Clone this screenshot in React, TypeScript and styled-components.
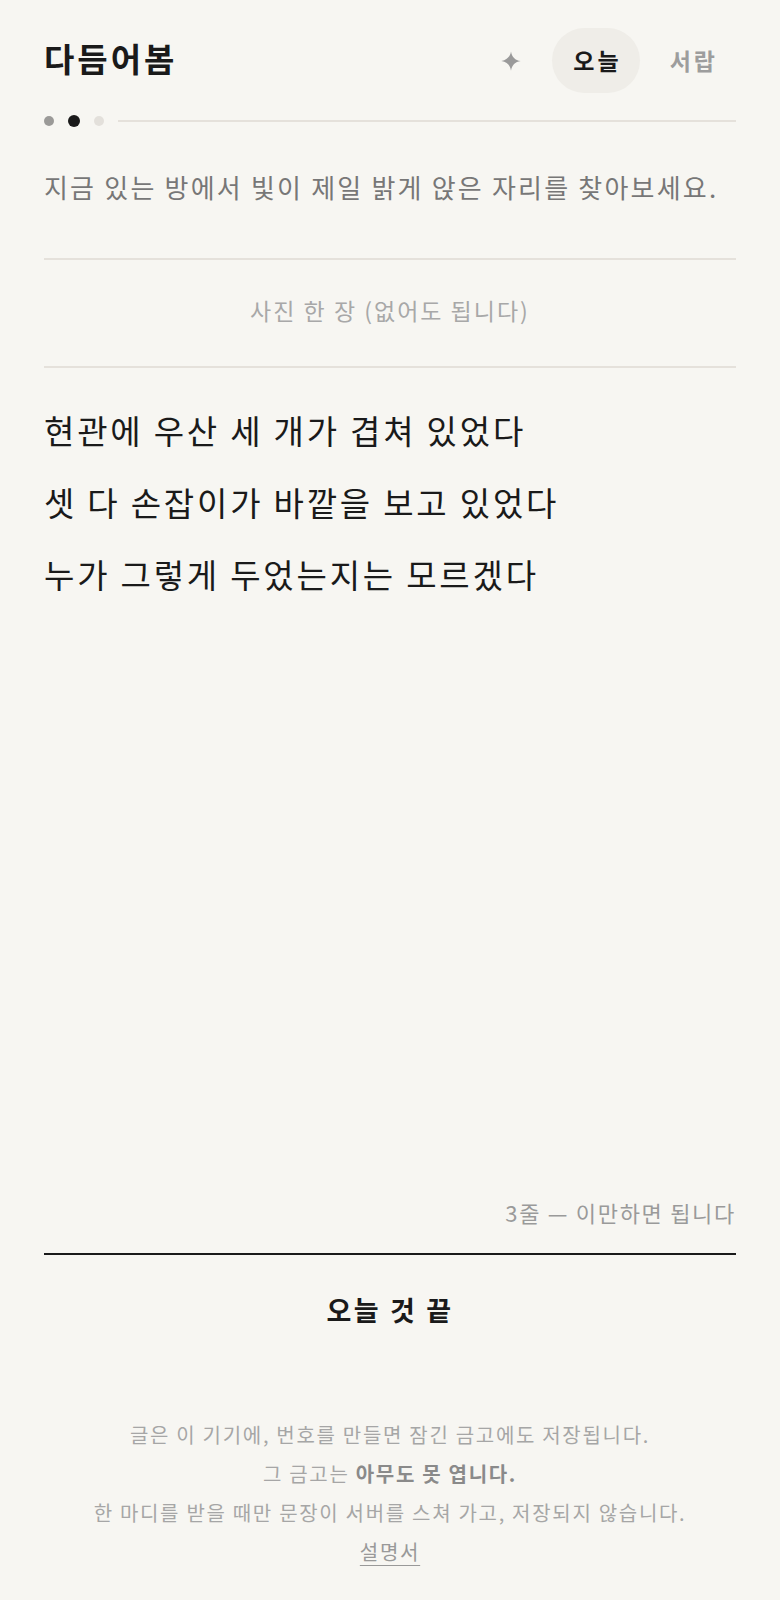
import styled, { createGlobalStyle } from 'styled-components'
import { ReactElement } from 'react'

const GlobalStyle = createGlobalStyle`
  html, body {
    margin: 0;
    padding: 0;
    background: #f7f6f2;
  }
  body {
    font-family: "Noto Sans CJK KR", "Noto Sans", sans-serif;
    color: #1a1a1a;
  }
  * { box-sizing: border-box; }
`

const Page = styled.div`
  min-height: 100vh;
  padding: 28px 44px 29px;
  display: flex;
  flex-direction: column;
`

const Header = styled.header`
  display: flex;
  align-items: center;
  justify-content: space-between;
`

const Title = styled.h1`
  margin: -4px 0 0;
  font-size: 33px;
  font-weight: 700;
  letter-spacing: 3px;
  line-height: 1;
`

const Nav = styled.nav`
  display: flex;
  align-items: center;
  gap: 9px;
`

const IconButton = styled.button`
  border: none;
  background: transparent;
  padding: 11px;
  margin-right: 10px;
  display: flex;
  color: #9a9a9a;
`

const NavButton = styled.button<{ $active?: boolean }>`
  border: none;
  font-family: inherit;
  font-size: 23px;
  font-weight: 700;
  letter-spacing: 3px;
  line-height: 33px;
  padding: 16px 18px 16px 21px;
  border-radius: 33px;
  background: ${p => p.$active ? '#efede8' : 'transparent'};
  color: ${p => p.$active ? '#1a1a1a' : '#9d9d9d'};
`

const Progress = styled.div`
  display: flex;
  align-items: center;
  gap: 14px;
  margin-top: 22px;
`

const Dot = styled.span<{ $state: 'done' | 'now' | 'todo' }>`
  display: block;
  width: ${p => p.$state === 'now' ? 12 : 10}px;
  height: ${p => p.$state === 'now' ? 12 : 10}px;
  border-radius: 50%;
  background: ${p => p.$state === 'done' ? '#9b9a98' : p.$state === 'now' ? '#1a1a1a' : '#e3e0db'};
`

const Track = styled.span`
  flex: 1;
  height: 2px;
  background: #e5e1db;
`

const Prompt = styled.p`
  margin: 40px 0 0;
  font-size: 26px;
  line-height: 39px;
  color: #777;
  letter-spacing: 2.2px;
`

const PhotoSlot = styled.div`
  margin-top: 52px;
  border-top: 2px solid #e5e1db;
  border-bottom: 2px solid #e5e1db;
  height: 110px;
  padding-bottom: 6px;
  display: flex;
  align-items: center;
  justify-content: center;
  font-size: 23px;
  letter-spacing: 2px;
  color: #a8a8a8;
`

const Poem = styled.div`
  flex: 1;
  margin-top: 26px;
`

const Line = styled.p`
  margin: 0;
  font-size: 33px;
  line-height: 72px;
  letter-spacing: 2.8px;
  color: #1a1a1a;
`

const Counter = styled.div`
  text-align: right;
  font-size: 22px;
  line-height: 30px;
  letter-spacing: 1.7px;
  color: #9a9a9a;
  margin-bottom: 26px;
`

const FinishButton = styled.button`
  border: none;
  border-top: 2px solid #1a1a1a;
  background: transparent;
  font-family: inherit;
  font-size: 27px;
  font-weight: 700;
  letter-spacing: 2.6px;
  line-height: 40px;
  padding: 35px 0 37px;
  color: #1a1a1a;
`

const Footer = styled.footer`
  margin-top: 48px;
  text-align: center;
  font-size: 20px;
  line-height: 39px;
  letter-spacing: 1.7px;
  color: #a6a6a6;
  p { margin: 0; }
  strong { color: #8a8a8a; font-weight: 700; }
`

const ManualLink = styled.a`
  color: #999;
  text-decoration: underline;
  text-underline-offset: 5px;
  text-decoration-thickness: 1px;
`

function Sparkle (): ReactElement {
  return (
    <svg width='22' height='22' viewBox='0 0 24 24' fill='currentColor'>
      <path d='M12 1.5 C12.9 7.4 16.6 11.1 22.5 12 C16.6 12.9 12.9 16.6 12 22.5 C11.1 16.6 7.4 12.9 1.5 12 C7.4 11.1 11.1 7.4 12 1.5Z' />
    </svg>
  )
}

const lines = [
  '현관에 우산 세 개가 겹쳐 있었다',
  '셋 다 손잡이가 바깥을 보고 있었다',
  '누가 그렇게 두었는지는 모르겠다'
]

export default function App (): ReactElement {
  return (
    <>
      <GlobalStyle />
      <Page>
        <Header>
          <Title>다듬어봄</Title>
          <Nav>
            <IconButton aria-label='영감'><Sparkle /></IconButton>
            <NavButton $active>오늘</NavButton>
            <NavButton>서랍</NavButton>
          </Nav>
        </Header>
        <Progress>
          <Dot $state='done' />
          <Dot $state='now' />
          <Dot $state='todo' />
          <Track />
        </Progress>
        <Prompt>지금 있는 방에서 빛이 제일 밝게 앉은 자리를 찾아보세요.</Prompt>
        <PhotoSlot>사진 한 장 (없어도 됩니다)</PhotoSlot>
        <Poem>
          {lines.map((l, i) => <Line key={i}>{l}</Line>)}
        </Poem>
        <Counter>3줄 — 이만하면 됩니다</Counter>
        <FinishButton>오늘 것 끝</FinishButton>
        <Footer>
          <p>글은 이 기기에, 번호를 만들면 잠긴 금고에도 저장됩니다.</p>
          <p>그 금고는 <strong>아무도 못 엽니다.</strong></p>
          <p>한 마디를 받을 때만 문장이 서버를 스쳐 가고, 저장되지 않습니다.</p>
          <p><ManualLink href='#'>설명서</ManualLink></p>
        </Footer>
      </Page>
    </>
  )
}
